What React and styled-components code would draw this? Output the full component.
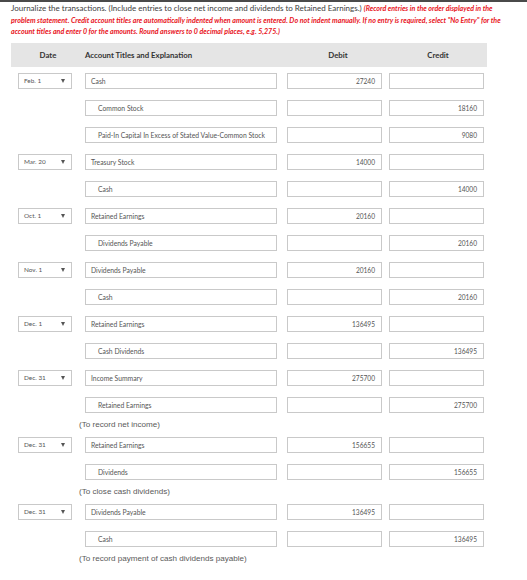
import React from 'react'
import styled, { createGlobalStyle } from 'styled-components'

const Global = createGlobalStyle`
  html, body {
    margin: 0;
    padding: 0;
    background: #fff;
  }
  body {
    font-family: Lato, "Liberation Sans", sans-serif;
    color: #444;
  }
`

const Page = styled.div`
  border-top: 2px solid #4a4a4a;
  padding: 0 0 0 11px;
  width: 527px;
  height: 578px;
  box-sizing: border-box;
`

const Instructions = styled.p`
  margin: 0;
  padding-top: 1px;
  width: 505px;
  font-size: 8px;
  line-height: 10.5px;
  color: #3c3c3c;

  em {
    color: #e8141c;
    font-weight: 700;
    font-size: 7.1px;
  }
`

const Journal = styled.div`
  width: 476px;
  margin-top: 5px;
`

const HeaderBar = styled.div`
  display: grid;
  grid-template-columns: 74px 202px 102px 98px;
  height: 24px;
  align-items: center;
  background: #e5e5e5;
  font-size: 7.8px;
  font-weight: 700;
  color: #333;
`

const HeadCell = styled.div`
  text-align: ${p => p.$align || 'left'};
`

const Row = styled.div`
  display: grid;
  grid-template-columns: 67px 202px 102px 95px;
  padding-left: 7px;
  margin-top: ${p => p.$tight ? 6 : 11}px;
  height: 16px;
`

const Box = styled.div`
  box-sizing: border-box;
  height: 16px;
  border: 1px solid #c9c9c9;
  background: #fff;
  display: flex;
  align-items: center;
  font-size: 6.8px;
  color: #555;
  white-space: nowrap;
  overflow: hidden;
`

const DateSelect = styled(Box)`
  width: 54px;
  padding: 0 6px 0 5px;
  justify-content: space-between;
  font-size: 6.4px;
`

const Arrow = styled.span`
  width: 0;
  height: 0;
  border-left: 2.5px solid transparent;
  border-right: 2.5px solid transparent;
  border-top: 4px solid #555;
`

const Account = styled(Box)`
  width: 192px;
  padding-left: ${p => p.$indent ? 12 : 5}px;
`

const Amount = styled(Box)`
  width: 95px;
  justify-content: flex-end;
  padding-right: 6px;
  font-size: 6.6px;
`

const Note = styled.div`
  margin: 6px 0 0 68px;
  height: 12px;
  line-height: 12px;
  font-family: "Liberation Sans", Arial, sans-serif;
  font-size: 8.1px;
  color: #5a5a5a;
`

const entries = [
  { date: 'Feb. 1', lines: [
    ['Cash', '27240', ''],
    ['Common Stock', '', '18160'],
    ['Paid-In Capital In Excess of Stated Value-Common Stock', '', '9080'],
  ] },
  { date: 'Mar. 20', lines: [
    ['Treasury Stock', '14000', ''],
    ['Cash', '', '14000'],
  ] },
  { date: 'Oct. 1', lines: [
    ['Retained Earnings', '20160', ''],
    ['Dividends Payable', '', '20160'],
  ] },
  { date: 'Nov. 1', lines: [
    ['Dividends Payable', '20160', ''],
    ['Cash', '', '20160'],
  ] },
  { date: 'Dec. 1', lines: [
    ['Retained Earnings', '136495', ''],
    ['Cash Dividends', '', '136495'],
  ] },
  { date: 'Dec. 31', lines: [
    ['Income Summary', '275700', ''],
    ['Retained Earnings', '', '275700'],
  ], note: '(To record net income)' },
  { date: 'Dec. 31', lines: [
    ['Retained Earnings', '156655', ''],
    ['Dividends', '', '156655'],
  ], note: '(To close cash dividends)' },
  { date: 'Dec. 31', lines: [
    ['Dividends Payable', '136495', ''],
    ['Cash', '', '136495'],
  ], note: '(To record payment of cash dividends payable)' },
]

export default function App() {
  let tight = true
  return (
    <>
      <Global />
      <Page>
        <Instructions>
          Journalize the transactions. (Include entries to close net income and dividends to Retained Earnings.){' '}
          <em>(Record entries in the order displayed in the problem statement. Credit account titles are automatically indented when amount is entered. Do not indent manually. If no entry is required, select "No Entry" for the account titles and enter 0 for the amounts. Round answers to 0 decimal places, e.g. 5,275.)</em>
        </Instructions>
        <Journal>
          <HeaderBar>
            <HeadCell $align="center">Date</HeadCell>
            <HeadCell>Account Titles and Explanation</HeadCell>
            <HeadCell $align="center">Debit</HeadCell>
            <HeadCell $align="center">Credit</HeadCell>
          </HeaderBar>
          {entries.map((entry, i) => {
            const rows = entry.lines.map(([title, debit, credit], j) => {
              const row = (
                <Row key={j} $tight={tight}>
                  {j === 0 ? (
                    <DateSelect>{entry.date}<Arrow /></DateSelect>
                  ) : <div />}
                  <Account $indent={j > 0}>{title}</Account>
                  <Amount>{debit}</Amount>
                  <Amount>{credit}</Amount>
                </Row>
              )
              tight = false
              return row
            })
            if (entry.note) tight = true
            return (
              <React.Fragment key={i}>
                {rows}
                {entry.note && <Note>{entry.note}</Note>}
              </React.Fragment>
            )
          })}
        </Journal>
      </Page>
    </>
  )
}
